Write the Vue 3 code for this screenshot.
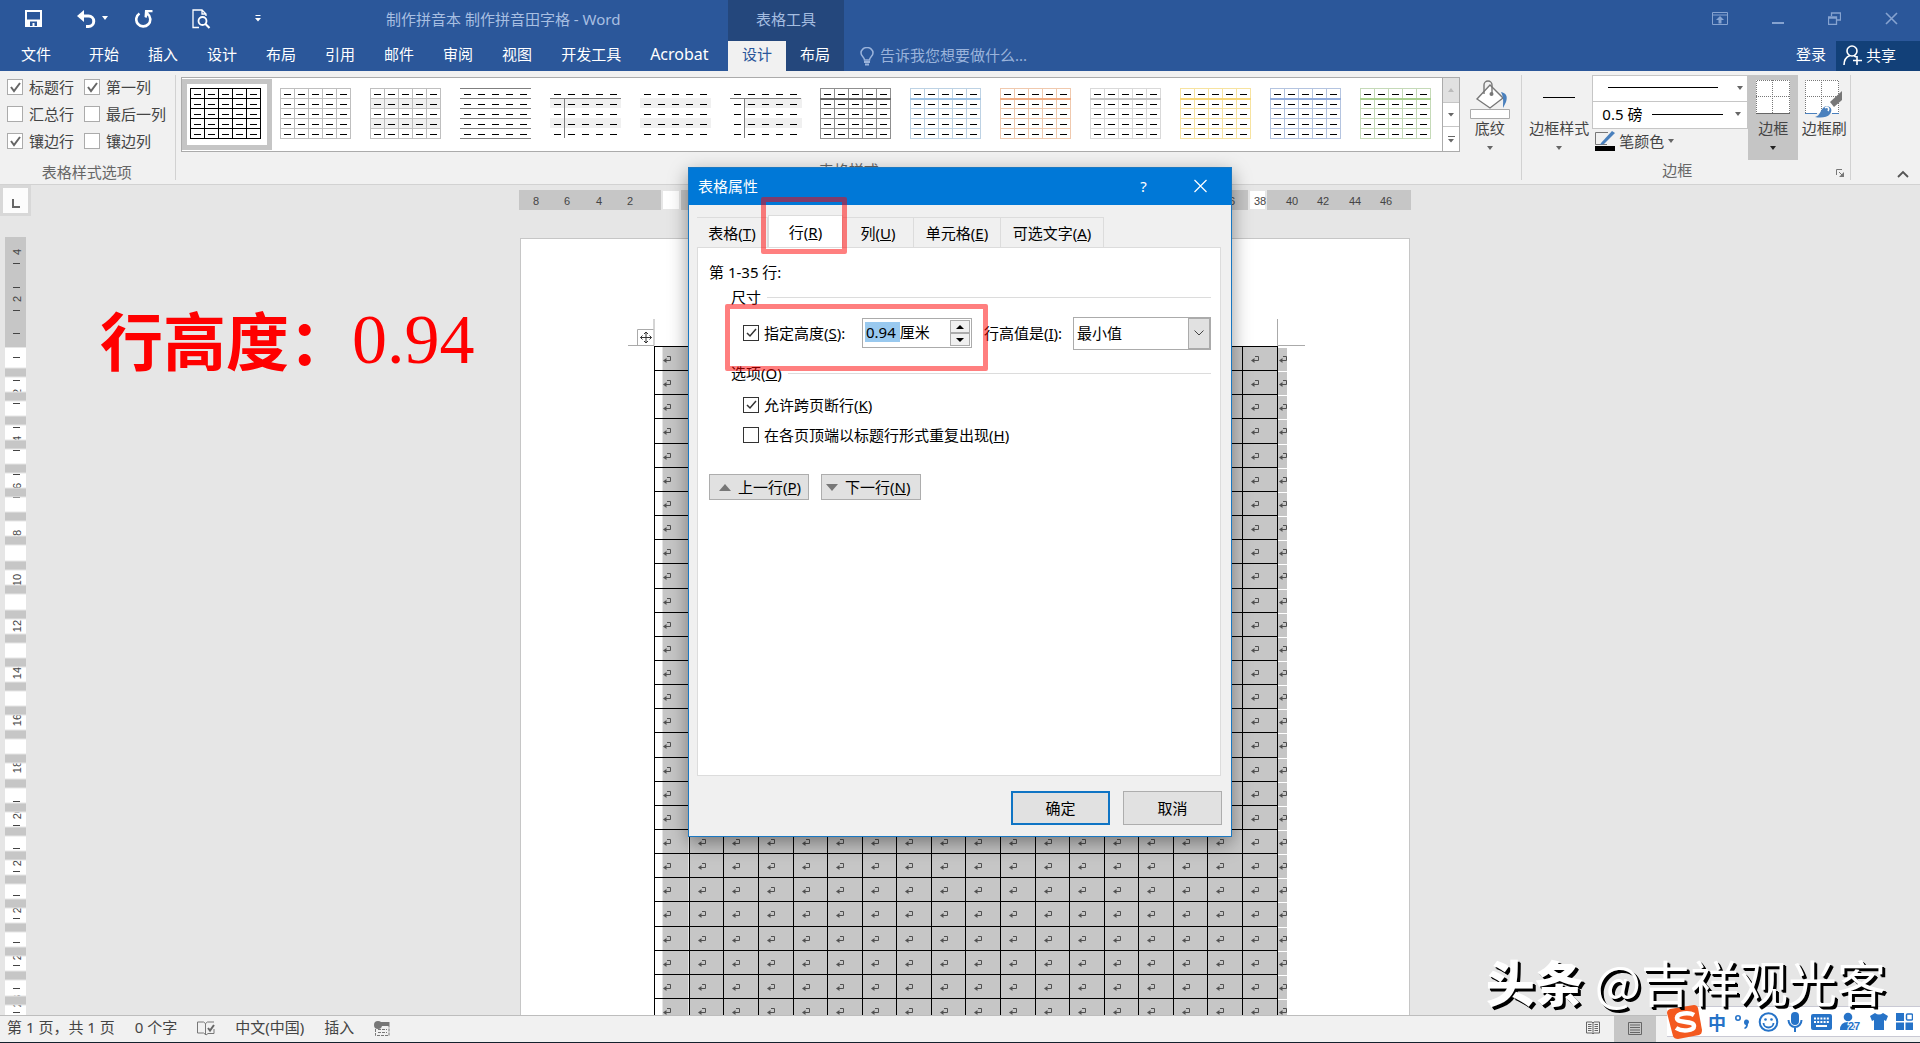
<script setup>
import { ref } from 'vue'

const tabs = ['开始', '插入', '设计', '布局', '引用', '邮件', '审阅', '视图', '开发工具', 'Acrobat']

const styleOptions = ref([
  { label: '标题行', on: true },
  { label: '第一列', on: true },
  { label: '汇总行', on: false },
  { label: '最后一列', on: false },
  { label: '镶边行', on: true },
  { label: '镶边列', on: false }
])

const tableStyles = [
  { kind: 'grid', color: '#000000', head: '', name: '网格型' },
  { kind: 'grid', color: '#bfbfbf', head: '', name: '网格型浅色' },
  { kind: 'grid', color: '#bfbfbf', head: '', name: '无格式表格 1', band: true },
  { kind: 'rows', color: '#7f7f7f', head: '', name: '无格式表格 2' },
  { kind: 'corner', color: '#7f7f7f', head: '', name: '无格式表格 3', band: true },
  { kind: 'none', color: '#7f7f7f', head: '', name: '无格式表格 4', band: true },
  { kind: 'corner', color: '#7f7f7f', head: '', name: '无格式表格 5', band: true },
  { kind: 'grid', color: '#8f8f8f', head: '#666666', name: '网格表 1 浅色' },
  { kind: 'grid', color: '#bdd2e4', head: '#9cc2e5', name: '着色 1' },
  { kind: 'grid', color: '#f0c9ae', head: '#f0ab82', name: '着色 2' },
  { kind: 'grid', color: '#d9d9d9', head: '#c4c4c4', name: '着色 3' },
  { kind: 'grid', color: '#f7e3a0', head: '#f7d675', name: '着色 4' },
  { kind: 'grid', color: '#b4c4e0', head: '#8faadc', name: '着色 5' },
  { kind: 'grid', color: '#c5dab8', head: '#a8d08d', name: '着色 6' }
]
const steps = [0, 1, 2, 3, 4, 5]
const cells = [0, 1, 2, 3, 4]

const colWidths = [35, 34, 35, 35, 34, 35, 34, 35, 34, 35, 35, 34, 35, 34, 35, 34, 35, 35]
const rowHeights = Array.from({ length: 28 }, (_, i) => ([3, 9, 16, 23].includes(i) ? 25 : 24))

const rulerTop = [
  ['8', 17], ['6', 48], ['4', 80], ['2', 111], ['36', 710], ['38', 741],
  ['40', 773], ['42', 804], ['44', 836], ['46', 867]
]
const sideBars = [132, 156, 180, 204, 228, 252, 276, 300, 325, 349, 374, 398, 422, 446, 470, 494, 518, 543, 567, 591, 615, 639, 663, 687, 711, 735, 760]
const sideTicks = [26, 50, 73, 96, 120, 143, 166, 190, 213, 237, 260, 542, 564, 588, 611, 634, 658, 681, 705, 728, 751, 775]
const sideLabels = [
  ['4', 15], ['2', 62], ['2', 155], ['4', 202], ['6', 249], ['8', 296], ['10', 343], ['12', 389], ['14', 436],
  ['16', 483], ['18', 530], ['20', 576], ['22', 623], ['24', 670], ['26', 717], ['28', 764]
]

const specifyHeight = ref(true)
const allowBreak = ref(true)
const repeatHeader = ref(false)
const heightValue = ref('0.94 厘米')
</script>

<template>
  <div class="app">
    <header class="top">
      <div class="quick">
        <button class="ic" aria-label="保存"><svg width="17" height="17" viewBox="0 0 17 17"><path d="M1 1h15v15H1z" fill="none" stroke="#fff" stroke-width="2"/><path d="M1 9.5h15V16H1z" fill="#fff"/><path d="M5 11.5h7V16H9.5v-3h-2v3H5z" fill="#2b579a"/></svg></button>
        <button class="ic undo" aria-label="撤消"><svg width="32" height="18" viewBox="0 0 32 18"><path d="M2 6h9.500a5 5 0 0 1 0 10.500H9" fill="none" stroke="#fff" stroke-width="3"/><path d="M0 6 7 0v12z" fill="#fff"/><path d="M25 6h6l-3 4z" fill="#fff"/></svg></button>
        <button class="ic redo" aria-label="重复"><svg width="18" height="18" viewBox="0 0 18 18"><path d="M4.500 3.500a7 7 0 1 0 8 .3" fill="none" stroke="#fff" stroke-width="2.600"/><path d="M10 0h7.500v2.200h-4L11.500 8 9.500 7z" fill="#fff"/></svg></button>
        <button class="ic preview" aria-label="打印预览"><svg width="19" height="20" viewBox="0 0 19 20"><path d="M7 18.500H1V1h9l4 4v2M10 1v4h4" fill="none" stroke="#fff" stroke-width="1.300"/><circle cx="10.500" cy="12" r="4" fill="none" stroke="#fff" stroke-width="1.800"/><path d="m13.500 15 4 4" stroke="#fff" stroke-width="2.200"/></svg></button>
        <button class="ic more" aria-label="自定义快速访问工具栏"><svg width="6" height="7" viewBox="0 0 6 7"><path d="M.5.5h5" stroke="#fff"/><path d="M0 3h6L3 6.500z" fill="#fff"/></svg></button>
        <span class="doc-title">制作拼音本 制作拼音田字格 - Word</span>
      </div>
      <div class="ctx-title">表格工具</div>
      <div class="win">
        <button class="ic" aria-label="功能区显示选项"><svg width="16" height="13" viewBox="0 0 16 13"><path d="M.5.5h15v12H.5zM.5 3h15" fill="none" stroke="#86a3d0"/><path d="M8 4 4 8h2.500v3.500h3V8H12z" fill="#86a3d0"/></svg></button>
        <button class="ic" aria-label="最小化"><svg width="12" height="13" viewBox="0 0 12 13"><path d="M0 11h12" stroke="#86a3d0" stroke-width="2"/></svg></button>
        <button class="ic" aria-label="还原"><svg width="13" height="13" viewBox="0 0 13 13"><path d="M.5 5h8v7.500h-8zM.5 6h8M3.500 4V1h9v7H9" fill="none" stroke="#86a3d0" stroke-width="1.300"/></svg></button>
        <button class="ic" aria-label="关闭"><svg width="13" height="13" viewBox="0 0 13 13"><path d="m1 1 11 11M12 1 1 12" stroke="#86a3d0" stroke-width="1.600"/></svg></button>
      </div>
      <nav class="tabs">
        <button class="tab file">文件</button>
        <button v-for="t in tabs" :key="t" class="tab">{{ t }}</button>
      </nav>
      <div class="ctx-tabs">
        <button class="ctx on">设计</button>
        <button class="ctx">布局</button>
      </div>
      <div class="right">
        <label class="tell">
          <svg width="14" height="19" viewBox="0 0 14 19"><path d="M4.500 13c0-3-3.500-3.500-3.500-7a6 5.500 0 0 1 12 0c0 3.500-3.500 4-3.500 7z" fill="none" stroke="#9ab3db" stroke-width="1.500"/><path d="M4 15h6M5 17.500h4" stroke="#9ab3db" stroke-width="2"/></svg>
          <input type="text" placeholder="告诉我您想要做什么..." aria-label="告诉我您想要做什么" />
        </label>
        <button class="tab login">登录</button>
        <button class="share"><svg width="19" height="21" viewBox="0 0 19 21"><circle cx="9" cy="6" r="5" fill="none" stroke="#fff" stroke-width="1.600"/><path d="M1 20c0-5 2-8 6-9.500M11 10.500l2 1.500M14 11v9M10 15.500h9" fill="none" stroke="#fff" stroke-width="1.600"/></svg>共享</button>
      </div>
    </header>

    <section class="ribbon">
      <div class="group options">
        <div class="checks">
          <label v-for="o in styleOptions" :key="o.label"><input v-model="o.on" type="checkbox" class="soft" />{{ o.label }}</label>
        </div>
        <div class="caption">表格样式选项</div>
      </div>

      <div class="group styles">
        <div class="body">
          <div class="gallery">
            <button v-for="(s, n) in tableStyles" :key="s.name" class="style" :class="{ picked: n === 0 }" :aria-label="s.name">
              <svg width="72" height="51" viewBox="0 0 72 51" shape-rendering="crispEdges">
                <g v-if="s.band" fill="#f0f0f0">
                  <rect :x="s.kind === 'corner' && n === 6 ? 14 : 0" y="10" width="71" height="10" />
                  <rect :x="s.kind === 'corner' && n === 6 ? 14 : 0" y="30" width="71" height="10" />
                </g>
                <g :stroke="s.color" fill="none">
                  <template v-if="s.kind === 'grid'">
                    <path v-for="i in steps" :key="'v' + i" :d="`M${i * 14 + 0.5} 0V51`" />
                  </template>
                  <template v-if="s.kind === 'grid' || s.kind === 'rows'">
                    <path v-for="i in steps" :key="'h' + i" :d="`M0 ${i * 10 + 0.5}H71`" />
                  </template>
                  <path v-if="s.kind === 'corner'" d="M0 10.500H71M14.500 10V50" />
                </g>
                <rect v-if="s.head" x="0" y="10" width="71" height="2" :fill="s.head" />
                <g fill="#000">
                  <template v-for="r in cells" :key="r">
                    <rect v-for="c in cells" :key="c" :x="c * 14 + 4" :y="r * 10 + 6" width="7" height="1" />
                  </template>
                </g>
              </svg>
            </button>
            <div class="scroll">
              <button class="off" aria-label="上一行样式"><svg width="7" height="4"><path d="M0 4h6L3 0z" fill="#bbb"/></svg></button>
              <button aria-label="下一行样式"><svg width="7" height="4"><path d="M0 0h6L3 3.500z" fill="#666"/></svg></button>
              <button aria-label="其他样式"><svg width="7" height="7"><path d="M0 .5h7" stroke="#666"/><path d="M0 3h6L3 6.500z" fill="#666"/></svg></button>
            </div>
          </div>
          <button class="big shade">
            <svg width="40" height="39" viewBox="0 0 40 39"><path d="M7 19 20 5l13 13-13 10z" fill="#fff" stroke="#777" stroke-width="1.400"/><path d="M14 14V5a4 4 0 0 1 8 0v8" fill="none" stroke="#777" stroke-width="1.400"/><circle cx="21.500" cy="14" r="2" fill="#777"/><path d="M31 12c5 1 7 4 5 10l-3 6c0-6 1-10-2-16z" fill="#4a80bd"/><path d="M.5 29.500h39v9H.5z" fill="#fff" stroke="#aaa"/></svg>
            <span>底纹</span><i class="caret"></i>
          </button>
        </div>
        <div class="caption">表格样式</div>
      </div>

      <div class="group borders">
        <div class="body">
          <button class="big line">
            <svg width="34" height="39" viewBox="0 0 34 39"><path d="M1 17.500h32" stroke="#000"/></svg>
            <span>边框样式</span><i class="caret"></i>
          </button>
          <div class="pens">
            <button class="combo" aria-label="笔样式"><svg width="110" height="1"><path d="M0 .5h110" stroke="#000"/></svg><i class="caret"></i></button>
            <label class="combo weight"><select aria-label="笔划粗细"><option>0.5 磅</option></select><svg width="71" height="1"><path d="M0 .5h71" stroke="#000"/></svg><i class="caret"></i></label>
            <button class="pen"><svg width="20" height="20" viewBox="0 0 20 20"><path d="M13 1.500H.5v12H12" fill="none" stroke="#777"/><path d="M6 12 17 0l3 2L9 13l-4 1z" fill="#4a80bd"/><path d="M0 15h20v5H0z"/></svg>笔颜色<i class="caret"></i></button>
          </div>
          <button class="big active">
            <svg width="34" height="39" viewBox="0 0 34 39"><path d="M0 0h34v34H0z" fill="#fff"/><path d="M.5 34V.5h33V34M16.500 0v33M0 16.500h34" fill="none" stroke="#777" stroke-dasharray="1 1"/><path d="M0 33.500h34" stroke="#666"/></svg>
            <span>边框</span><i class="caret dark"></i>
          </button>
          <button class="big">
            <svg width="38" height="39" viewBox="0 0 38 39"><path d="M0 0h34v33H0z" fill="#fff"/><path d="M.5 33V.5h33V33M16.500 0v33M0 16.500h34" fill="none" stroke="#777" stroke-dasharray="1 1"/><path d="M0 33.500h12M27 33.500h7" stroke="#4a80bd"/><path d="m25 22 12-11v9l-8 7z" fill="#777"/><path d="M10 37c6-1 5-9 11-11 5 0 7 4 4 8-3 4-10 4-15 3z" fill="#4a80bd"/><path d="M20 28c2-2 5 0 3 3" fill="none" stroke="#fff" stroke-width="1.500"/></svg>
            <span>边框刷</span>
          </button>
        </div>
        <div class="caption">边框<svg class="launch" width="8" height="8" viewBox="0 0 8 8"><path d="M.5 6V.5H6M3 3l3 3" fill="none" stroke="#777"/><path d="M8 3v5H3z" fill="#777"/></svg></div>
      </div>
      <button class="collapse" aria-label="折叠功能区"><svg width="12" height="8" viewBox="0 0 12 8"><path d="m1 7 5-5 5 5" fill="none" stroke="#555" stroke-width="1.800"/></svg></button>
    </section>

    <main class="work">
      <div class="side">
        <div class="tabstop"><svg width="8" height="9" viewBox="0 0 8 9"><path d="M1 0v8h7" fill="none" stroke="#666" stroke-width="2"/></svg></div>
        <svg class="vruler" width="21" height="778" viewBox="0 0 21 778" font-family="Liberation Sans, sans-serif" font-size="11">
          <path d="M0 0h22v110H0z" fill="#c6c6c6"/><path d="M0 111h22v667H0z" fill="#fff"/>
          <path v-for="t in sideTicks" :key="t" :d="`M8 ${t}.5h7`" stroke="#444"/>
          <text v-for="[t, y] in sideLabels" :key="y" :transform="`translate(16 ${y}) rotate(-90)`" text-anchor="middle" fill="#444">{{ t }}</text>
          <rect v-for="b in sideBars" :key="b" x="-1" :y="b - 1" width="24" height="9" fill="#c6c6c6" stroke="#e6e6e6"/>
        </svg>
      </div>
      <div class="canvas">
        <svg class="hruler" width="892" height="20" viewBox="0 0 892 20" font-family="Liberation Sans, sans-serif" font-size="11">
          <path d="M0 0h892v20H0z" fill="#c6c6c6"/>
          <path d="M143 0h18v20h-18zM730 0h17v20h-17z" fill="#fff" stroke="#e6e6e6" stroke-width="2"/>
          <text v-for="[t, x] in rulerTop" :key="t" :x="x" y="15" text-anchor="middle" fill="#444">{{ t }}</text>
        </svg>
        <article class="page">
          <svg class="anchor" width="41" height="27" viewBox="0 0 41 27"><path d="M0 26.500h26V0M9.500 26V10.500h16" fill="none" stroke="#aaa"/><path d="M18 13v11M12.500 18.500h11M16 15l2-2 2 2M16 22l2 2 2-2M14.500 16.500l-2 2 2 2M21.500 16.500l2 2-2 2" fill="none" stroke="#333"/></svg>
          <svg class="crop" width="28" height="27" viewBox="0 0 28 27"><path d="M.5 0v26.500H28" fill="none" stroke="#aaa"/></svg>
          <table>
            <colgroup>
              <col v-for="(w, i) in colWidths" :key="i" :style="{ width: w + 'px' }" />
              <col class="endcol" />
            </colgroup>
            <tbody>
              <tr v-for="(h, r) in rowHeights" :key="r" :style="{ height: h + 'px' }">
                <td v-for="(w, c) in colWidths" :key="c"><svg class="mark" width="8" height="8" viewBox="0 0 8 8"><use href="#ret" /></svg></td>
                <td class="end"><svg class="mark" width="8" height="8" viewBox="0 0 8 8"><use href="#ret" /></svg></td>
              </tr>
            </tbody>
          </table>
        </article>
      </div>
      <svg width="0" height="0" class="defs"><defs><g id="ret"><path d="M4 .5h3.500v4H2" fill="none" stroke="#505050"/><path d="M0 4.500 3.500 2v5z" fill="#505050"/></g></defs></svg>
      <p class="note">行高度：<span>0.94</span></p>
    </main>

    <footer class="status">
      <span>第 1 页，共 1 页</span>
      <span>0 个字</span>
      <svg width="18" height="15" viewBox="0 0 18 15"><path d="M8.500 13.500 6.500 12H.5V1h6l2 1.500V14M8.500 2.500 10.500 1H17M17 8v4.500h-6l-2 1.500" fill="none" stroke="#777"/><path d="m11 7 2 2.500L17 4" fill="none" stroke="#666" stroke-width="2"/></svg>
      <span class="lang">中文(中国)</span>
      <span>插入</span>
      <svg width="16" height="15" viewBox="0 0 16 15"><circle cx="4" cy="4" r="4" fill="#777"/><path d="M7 1h8.500v4H7z" fill="#777"/><path d="M1.500 8v6.500h13.500V5M4 8.500h9M4 11.500h9" fill="none" stroke="#777" stroke-dasharray="3 1"/></svg>
      <div class="views">
        <button aria-label="阅读视图"><svg width="14" height="14" viewBox="0 0 14 14"><path d="M.5 1h5.500l1 1 1-1h5.500v11H8l-1 1-1-1H.5zM7 2v11M2 3.500h3.500M2 5.500h3.500M2 7.500h3.500M2 9.500h3.500M8.500 3.500H12M8.500 5.500H12M8.500 7.500H12M8.500 9.500H12" fill="none" stroke="#666"/></svg></button>
        <button class="cur" aria-label="页面视图"><svg width="14" height="13" viewBox="0 0 14 13"><path d="M.5.5h13v12H.5zM2 3h10M2 5.500h10M2 8h10M2 10.500h10" fill="none" stroke="#666"/></svg></button>
      </div>
    </footer>

    <section class="dialog" role="dialog" aria-label="表格属性">
      <div class="bar">
        <h1>表格属性</h1>
        <button aria-label="帮助">?</button>
        <button aria-label="关闭"><svg width="13" height="14" viewBox="0 0 13 14"><path d="m.5 1 12 12M12.500 1l-12 12" stroke="#fff" stroke-width="1.200"/></svg></button>
      </div>
      <div class="strip" role="tablist">
        <button role="tab" class="t1">表格(<u>T</u>)</button>
        <button role="tab" class="t2" aria-selected="true">行(<u>R</u>)</button>
        <button role="tab" class="t1">列(<u>U</u>)</button>
        <button role="tab" class="t3">单元格(<u>E</u>)</button>
        <button role="tab" class="t4">可选文字(<u>A</u>)</button>
      </div>
      <div class="panel">
        <p class="range">第 1-35 行:</p>
        <h2 class="rule">尺寸</h2>
        <div class="size">
          <label class="chk"><input v-model="specifyHeight" type="checkbox" />指定高度(<u>S</u>):</label>
          <div class="spin">
            <input v-model="heightValue" type="text" aria-label="指定高度" />
            <div><button aria-label="增加"><svg width="8" height="4"><path d="M0 4h8L4 0z"/></svg></button><button aria-label="减少"><svg width="8" height="4"><path d="M0 0h8L4 4z"/></svg></button></div>
          </div>
          <label for="rule">行高值是(<u>I</u>):</label>
          <div class="pick">
            <select id="rule"><option>最小值</option><option>固定值</option></select>
            <span><svg width="10" height="6" viewBox="0 0 10 6"><path d="m.5.5 4.500 4.500L9.500.5" fill="none" stroke="#444"/></svg></span>
          </div>
        </div>
        <h2 class="rule opts">选项(<u>O</u>)</h2>
        <label class="chk row"><input v-model="allowBreak" type="checkbox" />允许跨页断行(<u>K</u>)</label>
        <label class="chk row"><input v-model="repeatHeader" type="checkbox" />在各页顶端以标题行形式重复出现(<u>H</u>)</label>
        <div class="steps">
          <button><svg width="12" height="7"><path d="M0 7h12L6 0z" fill="#777"/></svg>上一行(<u>P</u>)</button>
          <button class="next"><svg width="12" height="7"><path d="M0 0h12L6 7z" fill="#777"/></svg>下一行(<u>N</u>)</button>
        </div>
      </div>
      <div class="acts">
        <button class="ok">确定</button>
        <button>取消</button>
      </div>
      <div class="hl tabmark"></div>
      <div class="hl sizemark"></div>
    </section>

    <div class="ime">
      <svg class="sogou" width="36" height="36" viewBox="0 0 36 36"><path d="M3 5 27 1q3 0 4 3l4 22q0 4-3 5L11 35q-4 0-5-3L0 9q0-3 3-4z" fill="#f4591f"/><path d="M27 11c-5-3-17-2-17 3 0 6 17 2 17 8 0 5-12 6-18 2" fill="none" stroke="#fff" stroke-width="4.500"/></svg>
      <b>中</b>
      <svg width="16" height="18" viewBox="0 0 16 18"><circle cx="4" cy="5" r="2.200" fill="none" stroke="#2673c8" stroke-width="1.600"/><path d="M10 9a2.500 2.500 0 1 1 4 2q0 4-3 5l-1-1q2-1 2-3-2 0-2-3z" fill="#2673c8"/></svg>
      <svg width="21" height="20" viewBox="0 0 21 20"><circle cx="10.500" cy="10" r="8.800" fill="none" stroke="#2673c8" stroke-width="2"/><circle cx="7.500" cy="7.500" r="1.300" fill="#2673c8"/><circle cx="13.500" cy="7.500" r="1.300" fill="#2673c8"/><path d="M5.500 11a5 4.500 0 0 0 10 0" fill="none" stroke="#2673c8" stroke-width="1.800"/></svg>
      <svg width="16" height="20" viewBox="0 0 16 20"><rect x="4" y="0" width="8" height="13" rx="4" fill="#2673c8"/><path d="M1.500 8a6.500 7 0 0 0 13 0M8 15v5" fill="none" stroke="#2673c8" stroke-width="2"/></svg>
      <svg width="21" height="16" viewBox="0 0 21 16"><rect width="21" height="16" rx="2" fill="#2673c8"/><path d="M3 4.500h15M3 8h15" stroke="#fff" stroke-width="2" stroke-dasharray="2 1.200"/><path d="M5 12h11" stroke="#fff" stroke-width="2"/></svg>
      <svg width="22" height="20" viewBox="0 0 22 20"><circle cx="8" cy="5" r="4.300" fill="#2673c8"/><path d="M0 18q0-8 8-8t8 8z" fill="#2673c8"/><text x="8" y="18" font-size="11" font-weight="700" font-family="Liberation Sans, sans-serif" fill="#2673c8" stroke="#fff" stroke-width="2" paint-order="stroke">27</text></svg>
      <svg width="18" height="17" viewBox="0 0 18 17"><path d="M5 0q4 3 8 0l5 3-2 5-2-1v10H4V7L2 8 0 3z" fill="#2673c8"/></svg>
      <svg width="17" height="17" viewBox="0 0 17 17"><path d="M0 0h8v8H0zM0 9.500h8V17H0zM9.500 9.500H17V17H9.500z" fill="#2673c8"/><rect x="10.500" y="1" width="6" height="6" rx="1" fill="none" stroke="#2673c8" stroke-width="1.500"/></svg>
    </div>
    <div class="credit"><b>头条</b> @吉祥观光客</div>
  </div>
</template>

<style>
body { margin: 0; }
</style>

<style scoped>
* { box-sizing: border-box; }
.app {
  position: relative; display: flex; flex-direction: column; height: 100vh; overflow: hidden;
  background: #e6e6e6; color: #000; font: 15px/20px "Noto Sans", "Noto Sans CJK SC", sans-serif;
}
button, input, select { font: inherit; color: inherit; border: 0; padding: 0; margin: 0; background: none; border-radius: 0; white-space: nowrap; }
svg { display: block; flex: none; }
p, h1, h2 { margin: 0; font: inherit; }
label { white-space: nowrap; }

.top { display: grid; grid-template-columns: 728px 116px 1fr; grid-template-rows: 41px 30px; background: #2b579a; color: #fff; }
.top > div, .tabs { padding-bottom: 4px; }
.quick { display: flex; align-items: center; padding-left: 25px; }
.ic { display: flex; }
.undo { margin-left: 35px; }
.redo { margin-left: 26px; }
.preview { margin-left: 39px; }
.more { margin-left: 44px; }
.doc-title { margin-left: 125px; color: #a8bfe2; }
.ctx-title { display: flex; align-items: center; justify-content: center; background: #24477c; color: #a5bde0; }
.win { display: flex; justify-content: flex-end; align-items: center; gap: 44px; padding-right: 22px; }
.tabs { display: flex; align-items: center; gap: 29px; }
.file { width: 60px; padding-left: 12px; }
.tabs .tab:last-child { font-size: 16px; }
.top > .ctx-tabs { display: flex; background: #24477c; padding: 0; }
.ctx { flex: 1; padding-bottom: 4px; }
.ctx.on { background: #f1f1f1; color: #2b579a; }
.top > .right { display: flex; align-items: center; padding: 0; }
.tell { display: flex; align-items: center; gap: 6px; margin-left: 16px; flex: 1; }
.tell input { width: 200px; padding-bottom: 2px; }
.tell input::placeholder { color: #9ab3db; opacity: 1; }
.login { margin-right: 10px; padding-bottom: 4px; }
.share { display: flex; align-items: center; gap: 4px; width: 84px; height: 30px; padding: 0 0 2px 7px; background: #124078; }

.ribbon { display: flex; height: 114px; background: #f1f1f1; border-bottom: 1px solid #d2d2d2; color: #444; }
.group { display: flex; flex-direction: column; margin: 4px 0; border-right: 1px solid #d2d2d2; }
.caption { display: flex; align-items: center; justify-content: center; height: 20px; color: #666; position: relative; }
.options { width: 178px; }
.checks { display: grid; grid-template-columns: 77px 1fr; grid-auto-rows: 27px; height: 85px; margin-top: -2px; padding-left: 7px; align-items: center; }
.options .caption { margin-top: 8px; padding-right: 2px; }
.checks label { display: flex; align-items: center; gap: 6px; }
input[type="checkbox"] { appearance: none; width: 16px; height: 16px; flex: none; background: #fff center no-repeat; border: 1px solid #333; }
input[type="checkbox"]:checked { background-image: url("data:image/svg+xml,%3Csvg xmlns='http://www.w3.org/2000/svg' width='14' height='14'%3E%3Cpath d='M3 7l3 3 6-7' fill='none' stroke='%23333' stroke-width='1.500'/%3E%3C/svg%3E"); }
input.soft { border-color: #ababab; }
input.soft:checked { background-image: url("data:image/svg+xml,%3Csvg xmlns='http://www.w3.org/2000/svg' width='14' height='14'%3E%3Cpath d='M3 7l3 4 6-8' fill='none' stroke='%23666' stroke-width='2'/%3E%3C/svg%3E"); }
.body { display: flex; height: 91px; }
.styles { flex: 1; }
.gallery { display: flex; flex: 1; height: 75px; margin: 2px 0 0 5px; background: #fff; border: 1px solid #ababab; border-right: 0; overflow: hidden; }
.style { width: 90px; height: 71px; margin-top: 1px; flex: none; display: flex; align-items: center; justify-content: center; padding: 0 2px 2px 0; }
.picked { border: 5px solid #c5c5c5; }
.scroll { display: flex; flex-direction: column; width: 18px; margin-left: auto; border: solid #ababab; border-width: 0 1px; }
.scroll button { flex: 1; display: flex; align-items: center; justify-content: center; border-top: 1px solid #c6c6c6; }
.scroll .off { background: #e1e1e1; border-top: 0; }
.big { display: flex; flex-direction: column; align-items: center; width: 50px; height: 85px; padding-top: 5px; }
.big span { margin-top: -1px; }
.big .caret { margin-top: 8px; }
.shade { width: 60px; flex: none; padding-right: 4px; margin-left: 2px; }
.line { width: 66px; margin-left: 4px; }
.caret { width: 0; height: 0; border: 3px solid transparent; border-top: 4px solid #666; border-bottom: 0; }
.caret.dark { border-top-color: #222; }
.active { background: #c5c5c5; }
.big:last-child { width: 52px; }
.big.shade { width: 59px; }
.pens { width: 156px; display: flex; flex-direction: column; }
.combo { position: relative; display: flex; align-items: center; height: 27px; padding: 0 4px 2px 15px; background: #fff; border: 1px solid #c6c6c6; }
.combo .caret { margin-left: auto; }
.weight { padding-left: 9px; padding-right: 6px; border-top: 0; color: #000; }
.weight select { appearance: none; width: 50px; }
.pen { display: flex; align-items: center; gap: 4px; height: 24px; padding-left: 3px; }
.borders { width: 331px; }
.borders .caption { padding-right: 18px; }
.launch { position: absolute; right: 6px; bottom: 3px; }
.collapse { width: 69px; display: flex; justify-content: center; align-items: flex-end; padding: 0 0 6px 34px; }

.work { position: relative; flex: 1; min-height: 0; display: flex; overflow: hidden; padding-right: 22px; }
.side { width: 31px; flex: none; }
.tabstop { width: 31px; height: 31px; border: 3px solid #d8d8d8; background: #fcfcfc; display: flex; align-items: center; justify-content: center; padding-top: 5px; }
.vruler { margin: 21px 0 0 5px; }
.canvas { flex: 1; display: flex; flex-direction: column; align-items: center; padding-top: 5px; }
.page { position: relative; width: 890px; flex: none; min-height: 1200px; margin-top: 28px; padding: 107px 0 0 133px; background: #fff; border: 1px solid #c6c6c6; border-bottom: 0; }
.anchor { position: absolute; left: 107px; top: 80px; }
.crop { position: absolute; left: 756px; top: 80px; }
table { border-collapse: collapse; table-layout: fixed; width: 633px; }
.endcol { width: 10px; }
td { padding: 2px 0 0 8px; border: 1px solid #000; background: #c6c6c6; line-height: 0; }
td:first-child { background: linear-gradient(90deg, #fff 8px, #c6c6c6 8px); }
td.end { padding: 2px 0 0 1px; border-width: 0 0 0 1px; background: linear-gradient(#fff 1px, #c6c6c6 1px); }
.defs { position: absolute; }
.note { position: absolute; left: 100px; top: 113px; color: #f00; font: 700 63px/80px "Noto Sans CJK SC", sans-serif; display: flex; align-items: flex-end; white-space: nowrap; }
.note span { font: 70px/76px "Liberation Serif", serif; }

.status { display: flex; align-items: center; height: 28px; flex: none; padding-left: 7px; gap: 20px; background: #f1f1f1; border-top: 1px solid #bdbdbd; border-bottom: 1px solid #14202c; color: #444; white-space: nowrap; }
.status > span { padding-bottom: 4px; }
.status > svg { margin-bottom: 2px; }
.views { margin-left: auto; margin-right: 264px; display: flex; align-self: stretch; }
.views button { width: 42px; display: flex; align-items: center; justify-content: center; padding-bottom: 2px; }
.views .cur { background: #c6c6c6; }

.dialog { position: absolute; left: 50%; top: 167px; width: 544px; height: 670px; margin-left: -272px; display: flex; flex-direction: column; background: #f0f0f0; border: 1px solid #1a78c2; box-shadow: 0 6px 18px rgba(0, 0, 0, .4); }
.bar { display: flex; align-items: center; height: 37px; flex: none; padding: 0 0 2px 9px; background: #0078d7; color: #fff; }
.bar h1 { flex: 1; }
.bar button { width: 57px; height: 35px; display: flex; align-items: center; justify-content: center; }
.bar button:last-child { margin-right: 2px; }
.strip { display: flex; align-items: flex-end; height: 42px; flex: none; padding-left: 8px; }
.strip button { height: 30px; border: 1px solid #dcdcdc; border-width: 1px 1px 0 0; }
.t1 { width: 71px; }
.strip .t2 { width: 75px; height: 32px; background: #fff; border-left-width: 1px; }
.t3 { width: 87px; }
.t4 { width: 103px; }
.panel { flex: 1; margin: 0 10px 0 8px; padding: 14px 9px 0 11px; background: #fff; border: 1px solid #dcdcdc; }
.rule { display: flex; align-items: center; gap: 6px; margin: 5px 0 0 22px; white-space: nowrap; }
.rule u { margin: 0 -6px; }
.rule::after { content: ""; flex: 1; height: 1px; background: #dcdcdc; }
.opts { margin-top: 13px; }
.size { display: grid; grid-template-columns: 119px 122px 89px 1fr; align-items: center; height: 34px; margin: 9px 0 0 34px; }
.chk { display: flex; align-items: center; }
.chk input { margin-right: 5px; }
.chk.row { margin: 12px 0 0 34px; }
.chk.row + .row { margin-top: 10px; }
.spin { display: flex; width: 110px; height: 30px; border: 1px solid #ababab; padding: 1px; }
.spin input { flex: 1; min-width: 0; padding: 0 0 2px 2px; background: linear-gradient(#99c9ef, #99c9ef) 1px 2px / 35px 20px no-repeat; }
.spin div { width: 20px; display: flex; flex-direction: column; }
.spin button { flex: 1; display: flex; align-items: center; justify-content: center; background: #f0f0f0; border: 1px solid #ababab; }
.pick { position: relative; display: flex; height: 33px; border: 1px solid #ababab; }
.pick select { appearance: none; flex: 1; padding-left: 3px; }
.pick span { position: absolute; right: 0; top: 0; bottom: 0; width: 22px; display: flex; align-items: center; justify-content: center; background: #e1e1e1; border: 1px solid #ababab; pointer-events: none; }
.steps { display: flex; gap: 12px; margin-top: 29px; }
.steps button { display: flex; align-items: center; width: 100px; height: 26px; padding-left: 9px; background: #e1e1e1; border: 1px solid #adadad; }
.steps svg { margin-right: 7px; }
.steps .next { padding-left: 4px; }
.acts { display: flex; justify-content: flex-end; gap: 13px; height: 60px; flex: none; padding: 15px 9px 0 0; }
.acts button { width: 99px; height: 34px; background: #e1e1e1; border: 1px solid #adadad; }
.acts .ok { border: 2px solid #0f74c4; }
.hl { position: absolute; border: 5px solid rgba(255, 0, 0, .5); border-radius: 2px; pointer-events: none; }
.tabmark { left: 72px; top: 29px; width: 86px; height: 57px; }
.sizemark { left: 36px; top: 136px; width: 263px; height: 67px; }

.ime { position: absolute; right: 0; bottom: 6px; height: 31px; display: flex; align-items: center; gap: 8px; padding-right: 7px; background: #fff; border: solid #c9c9d4; border-width: 1px 0; }
.ime b { font: 700 18px/18px "Noto Sans CJK SC", sans-serif; color: #2673c8; margin-left: -3px; }
.sogou { margin: -3px 0; }
.credit { position: absolute; right: 34px; bottom: 37px; font: 49px/50px "Noto Sans CJK SC", sans-serif; color: #fff; text-shadow: 2px 2px 0 #000, 3px 3px 0 #000; white-space: nowrap; }
.credit b { font-weight: 900; }
</style>
